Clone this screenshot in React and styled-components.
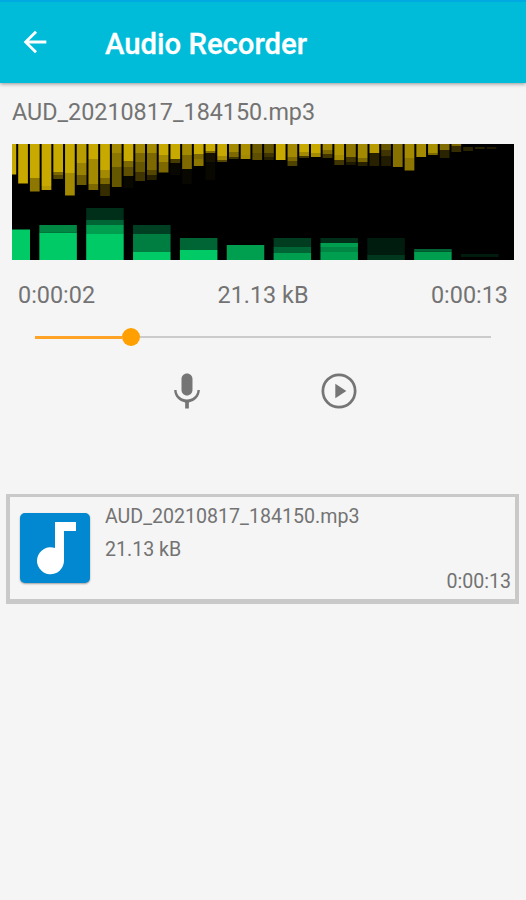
import styled, { createGlobalStyle } from "styled-components";

const GlobalStyle = createGlobalStyle`
* {
    box-sizing: border-box;
}
body {
    margin: 0;
    background-color: #f5f5f5;
    font-family: Roboto, "Liberation Sans", sans-serif;
    color: #737373;
}
`;

const Screen = styled.div`
display: flex;
flex-direction: column;
height: 900px;
width: 526px;
overflow: hidden;
`;

const Header = styled.header`
display: flex;
align-items: center;
flex-shrink: 0;
height: 83px;
padding: 2px 18px 0 18px;
border-top: 2px solid #00a9e2;
background-color: #00bcd9;
box-shadow: 0 1px 4px rgba(0, 0, 0, 0.4);
color: #fff;
`;

const BackButton = styled.button`
display: flex;
padding: 0;
border: 0;
background: none;
color: inherit;
margin-top: -3px;
`;

const Title = styled.h1`
margin: 0 0 0 53px;
font-size: 29.3px;
font-weight: 500;
line-height: 34px;
-webkit-text-stroke: 0.3px #fff;
white-space: nowrap;
`;

const Player = styled.section`
display: flex;
flex-direction: column;
padding: 0 12px;
`;

const FileName = styled.div`
height: 61px;
padding-top: 14px;
font-size: 23.35px;
line-height: 30px;
white-space: nowrap;
`;

const Visualizer = styled.svg`
display: block;
width: 502px;
height: 116px;
background-color: #000;
`;

const Stats = styled.div`
display: flex;
justify-content: space-between;
padding: 20px 6px 0 6px;
font-size: 23.4px;
line-height: 30px;
`;

const Slider = styled.div`
display: flex;
align-items: center;
height: 18px;
margin: 18px 23px 0;
`;

const Track = styled.div`
flex: ${({ $grow }) => ($grow ? "1" : "none")};
height: ${({ $grow }) => ($grow ? "2px" : "3px")};
background-color: ${({ $grow }) => ($grow ? "#cbcbcb" : "#ffa326")};
`;

const Thumb = styled.div`
width: 18px;
height: 18px;
border-radius: 50%;
background-color: #ffa000;
`;

const Controls = styled.div`
display: flex;
justify-content: center;
gap: 108px;
height: 44px;
margin-top: 23px;
`;

const IconButton = styled.button`
display: flex;
padding: 0;
border: 0;
background: none;
color: #757575;
`;

const Recording = styled.article`
display: flex;
height: 110px;
margin: 81px 7px 0 6px;
padding: 16px 4px 0 10px;
border: 4px solid #c9c9c9;
border-top-width: 3px;
border-bottom-width: 5px;
`;

const Cover = styled.div`
display: flex;
flex-shrink: 0;
width: 70px;
height: 70px;
border-radius: 5px;
background-color: #0288d1;
box-shadow: 0 1px 2px rgba(0, 0, 0, 0.35);
`;

const Details = styled.div`
display: flex;
flex: 1;
flex-direction: column;
margin-left: 15px;
margin-top: -8px;
font-size: 19.6px;
line-height: 24px;
`;

const Detail = styled.div`
align-self: ${({ $end }) => ($end ? "flex-end" : "flex-start")};
margin-bottom: 8.5px;
white-space: nowrap;
`;

const GOLD = "#c7a900";
const GOLD_MID = "#a38a00";
const GOLD_DIM = "#7d6900";
const GOLD_DARK = "#403500";
const GOLD_FAINT = "#1d1800";

const GREEN = "#00ca65";
const GREEN_MID = "#009f50";
const GREEN_DIM = "#006534";
const GREEN_DARK = "#003d20";
const GREEN_FAINT = "#001c0f";

// [length from the top, colour], nearest segment first
const treble = [
    [[30.5, GOLD]],
    [[39.5, GOLD]],
    [[34, GOLD], [47.5, "#8d7700"]],
    [[42, GOLD], [46, "#b79b00"]],
    [[28, GOLD], [31, "#7d6900"], [35, "#554700"]],
    [[29, GOLD], [51.5, GOLD_MID]],
    [[19, "#b89c00"], [31, "#998200"], [41, "#6c5b00"]],
    [[15, GOLD], [40, GOLD_MID], [46, GOLD_DIM]],
    [[26, GOLD], [34, GOLD_MID], [40, GOLD_DIM], [52, "#352c00"]],
    [[9, GOLD_MID], [23, "#8c7600"], [43, "#655600"]],
    [[17, GOLD], [23, GOLD_DIM], [32, "#5e5000"], [44, "#080700"]],
    [[9, GOLD_MID], [18, GOLD_DIM], [28, "#665600"], [37, GOLD_DARK]],
    [[9, GOLD_MID], [26, GOLD_DIM], [31, "#554700"], [36, "#282100"]],
    [[11, GOLD], [18, GOLD_MID], [28.5, GOLD_DIM]],
    [[15, GOLD], [19, "#463b00"], [31, "#080700"]],
    [[11, GOLD_MID], [25, GOLD_DIM], [40, "#080700"]],
    [[10, GOLD], [15, GOLD_DIM], [22, "#8c7600"]],
    [[7, GOLD], [9, GOLD_DIM], [18, "#171300"], [36, "#080700"]],
    [[12, GOLD], [16, "#a38a00"], [18, "#554700"]],
    [[8, GOLD_MID], [13, GOLD_DIM], [15, GOLD_DARK]],
    [[11, "#aa9000"], [15, GOLD_MID]],
    [[9, "#6c5b00"], [16, "#5e5000"]],
    [[9, "#665600"], [13, GOLD_DARK], [16, "#282100"]],
    [[16, GOLD]],
    [[13, GOLD_MID], [17, GOLD_DIM], [22, "#504300"]],
    [[8, GOLD], [12, GOLD_MID], [14, GOLD_DARK]],
    [[9, GOLD], [13, GOLD_MID]],
    [[6, GOLD_MID], [10, GOLD_DIM], [14, GOLD_DARK]],
    [[11, "#b29700"], [16, GOLD_MID], [21, GOLD_DARK]],
    [[13, "#8c7600"], [18, "#403500"], [21, GOLD_FAINT]],
    [[14, GOLD_MID], [18, GOLD_DIM], [22, "#282100"]],
    [[9, "#b89c00"], [22, "#282100"]],
    [[6, "#665600"], [12, GOLD_DARK], [22, "#211c00"]],
    [[23, "#857000"]],
    [[14, GOLD_MID], [26.5, "#8c7600"]],
    [[13, GOLD_MID]],
    [[9, "#a99000"], [11, GOLD_DIM]],
    [[6, "#806c00"], [14, "#2a2300"]],
    [[2, GOLD_DIM], [8, "#352c00"]],
    [[3, "#000"], [7, "#2a2300"]],
    [[3, "#000"], [5, "#2a2300"]],
    [[3, "#000"], [5, "#1d1800"]],
];

// [height from the bottom, colour], nearest segment first
const bass = [
    [[30.5, GREEN]],
    [[27.5, GREEN], [35, "#008744"]],
    [[26, GREEN], [35, GREEN_MID], [40.5, GREEN_DIM], [52, "#002f19"]],
    [[8, GREEN], [26, "#007d40"], [35, "#004022"]],
    [[10, GREEN], [22, GREEN_DIM]],
    [[15, GREEN_MID]],
    [[7, GREEN_MID], [13, GREEN_DIM], [22, GREEN_DARK]],
    [[8, GREEN_MID], [13, "#008744"], [17, GREEN_MID], [22, "#002f19"]],
    [[5.5, "#00371d"], [22, GREEN_FAINT]],
    [[8.5, GREEN_MID], [11, GREEN_DIM]],
    [[3, "#000"], [6, GREEN_FAINT]],
];

function Bars({ bars, start, step, width, fromBottom }) {
    return bars.map((segments, i) =>
        segments.map(([end, color], n) => {
            const begin = n ? segments[n - 1][0] : 0;
            return (
                <rect
                    key={`${i}-${n}`}
                    x={start + i * step}
                    y={fromBottom ? 116 - end : begin}
                    width={width}
                    height={end - begin}
                    fill={color}
                />
            );
        })
    );
}

function ArrowBack() {
    return (
        <svg width="34" height="34" viewBox="0 0 24 24" fill="currentColor">
            <path d="M20 11H7.83l5.59-5.59L12 4l-8 8 8 8 1.41-1.41L7.83 13H20v-2z" />
        </svg>
    );
}

function Mic() {
    return (
        <svg width="44" height="44" viewBox="0 0 24 24" fill="currentColor">
            <path d="M12 14.500c1.660 0 2.990-1.340 2.990-3L15 5.500c0-1.660-1.340-3-3-3s-3 1.340-3 3v6c0 1.660 1.340 3 3 3zm5.700-3c0 3-2.740 5.200-5.700 5.200s-5.700-2.200-5.700-5.200H5c0 3.410 2.720 6.230 6 6.720v3.280h2v-3.280c3.280-.480 6-3.300 6-6.720h-1.300z" />
        </svg>
    );
}

function PlayCircle() {
    return (
        <svg width="44" height="44" viewBox="0 0 24 24">
            <circle cx="12" cy="12" r="8.800" fill="none" stroke="currentColor" strokeWidth="1.500" />
            <path d="M10 8v8l6-4z" fill="currentColor" />
        </svg>
    );
}

function Note() {
    return (
        <svg width="70" height="70" viewBox="0 0 70 70" fill="#fff">
            <path d="M35 9h21v9H44v29.500A13.500 13.500 0 1 1 35 35z" />
        </svg>
    );
}

function App() {
    return (
        <Screen>
            <GlobalStyle />
            <Header>
                <BackButton aria-label="Back">
                    <ArrowBack />
                </BackButton>
                <Title>Audio Recorder</Title>
            </Header>
            <Player>
                <FileName>AUD_20210817_184150.mp3</FileName>
                <Visualizer viewBox="0 0 502 116">
                    <Bars bars={treble} start={-5.500} step={11.710} width={9.700} />
                    <Bars bars={bass} start={-19.500} step={46.850} width={37.500} fromBottom />
                </Visualizer>
                <Stats>
                    <span>0:00:02</span>
                    <span>21.13 kB</span>
                    <span>0:00:13</span>
                </Stats>
                <Slider>
                    <Track style={{ width: 87 }} />
                    <Thumb />
                    <Track $grow />
                </Slider>
                <Controls>
                    <IconButton aria-label="Record">
                        <Mic />
                    </IconButton>
                    <IconButton aria-label="Play">
                        <PlayCircle />
                    </IconButton>
                </Controls>
            </Player>
            <Recording>
                <Cover>
                    <Note />
                </Cover>
                <Details>
                    <Detail>AUD_20210817_184150.mp3</Detail>
                    <Detail>21.13 kB</Detail>
                    <Detail $end>0:00:13</Detail>
                </Details>
            </Recording>
        </Screen>
    );
}

export default App;
